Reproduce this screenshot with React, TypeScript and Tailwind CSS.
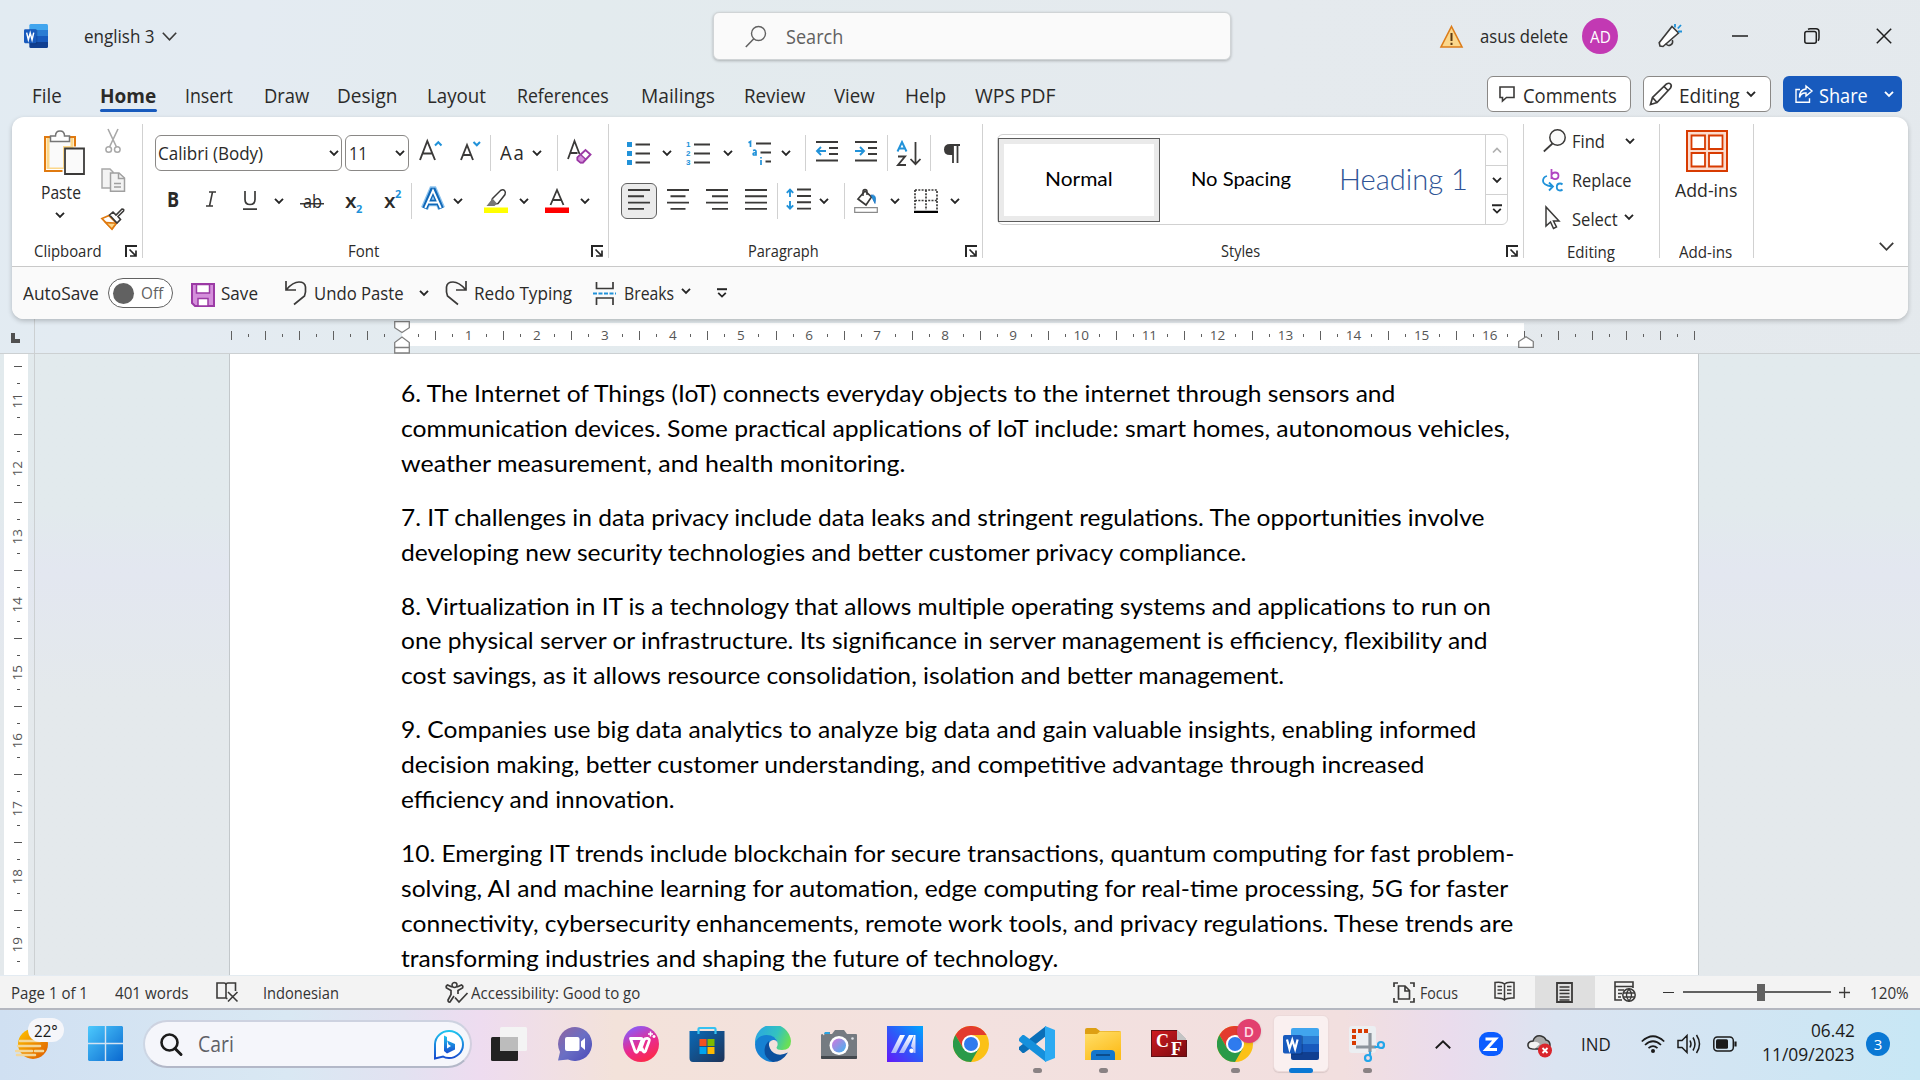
import { useLayoutEffect, useRef, useState, type ReactNode } from "react";

/** Single-line text drawn at a given width. */
function Fit({ w, className = "", children }: { w: number; className?: string; children: ReactNode }) {
  const ref = useRef<HTMLSpanElement>(null);
  const [scale, setScale] = useState(1);
  useLayoutEffect(() => {
    if (ref.current) setScale(w / ref.current.offsetWidth);
  }, [w]);
  return (
    <span className={"block shrink-0 whitespace-nowrap " + className} style={{ width: w }}>
      <span ref={ref} className="inline-block origin-left" style={{ transform: `scaleX(${scale})` }}>
        {children}
      </span>
    </span>
  );
}

function Svg({ w, h, vb, className = "", children }: { w: number; h: number; vb?: string; className?: string; children: ReactNode }) {
  return (
    <svg width={w} height={h} viewBox={vb ?? `0 0 ${w} ${h}`} fill="none" stroke="#3b3a39" strokeWidth={1.5} className={"shrink-0 overflow-visible " + className}>
      {children}
    </svg>
  );
}

const Chev = ({ className = "", color = "#262626" }: { className?: string; color?: string }) => (
  <Svg w={10} h={6} className={className}>
    <path d="M1 .8 5 4.8 9 .8" stroke={color} strokeWidth={1.9} />
  </Svg>
);

const Sep = ({ className = "" }: { className?: string }) => <div className={"h-9 w-px shrink-0 bg-[#d1d1d1] " + className} />;

const Launcher = ({ className = "" }: { className?: string }) => (
  <Svg w={12} h={12} className={className}>
    <path d="M1 12V1h11" strokeWidth={2} stroke="#262626" />
    <path d="m4.500 4.500 6 6M11 5.500V11H5" stroke="#262626" strokeWidth={1.7} />
  </Svg>
);

const Overflow = ({ className = "" }: { className?: string }) => (
  <Svg w={10} h={10} className={className}>
    <path d="M0 1.200h10" stroke="#262626" strokeWidth={2} />
    <path d="m1.200 4.800 3.800 3.800 3.800-3.800" stroke="#262626" strokeWidth={1.8} />
  </Svg>
);

function WordIcon({ w, h }: { w: number; h: number }) {
  return (
    <svg width={w} height={h} viewBox="0 0 36 32" preserveAspectRatio="none" className="shrink-0">
      <path d="M10 0h24q2 0 2 2v6H8V2q0-2 2-2z" fill="#41a5ee" />
      <path d="M8 8h28v8H8z" fill="#2b7cd3" />
      <path d="M8 16h28v8H8z" fill="#185abd" />
      <path d="M8 24h28v6q0 2-2 2H10q-2 0-2-2z" fill="#103f91" />
      <path d="M8 7h10q2 0 2 2v16q0 2-2 2H8z" fill="#0b2d66" opacity=".35" />
      <rect y="7" width="18.500" height="18.500" rx="1.800" fill="#185abd" />
      <path d="M4 11.500 6.500 21 9.300 12l2.800 9 2.500-9.500" fill="none" stroke="#fff" strokeWidth="2.200" />
    </svg>
  );
}

function TitleBar() {
  return (
    <header className="flex h-[72px] items-center">
      <div className="ml-6 flex"><WordIcon w={24} h={24} /></div>
      <Fit w={71} className="ml-9 text-[18px]">english 3</Fit>
      <Svg w={15} h={9} className="ml-[7px]"><path d="m.8.800 6.700 7 6.700-7" strokeWidth={1.600} /></Svg>
      <div className="ml-[536px] flex h-12 w-[518px] shrink-0 items-center rounded-md border border-[#d0d4d6] bg-[#fafafa] shadow-[0_1px_3px_rgba(0,0,0,0.25)]">
        <Svg w={22} h={23} className="ml-[31px]">
          <circle cx="13.500" cy="8.500" r="7" stroke="#616161" strokeWidth={1.400} />
          <path d="M8.800 13.800.8 22" stroke="#616161" strokeWidth={1.500} />
        </Svg>
        <Fit w={57} className="mt-0.5 ml-[19px] text-[20px] text-[#616161]">Search</Fit>
      </div>
      <Svg w={23} h={23} className="ml-[209px]">
        <path d="M11.500 1.500 22 22H1z" fill="#fbd78b" stroke="#dc7d1b" strokeWidth={1.600} />
        <path d="M11.500 8v8m0 1.800v2.200" stroke="#5c3a12" strokeWidth={2} />
      </Svg>
      <Fit w={88} className="ml-[17px] text-[18px]">asus delete</Fit>
      <div className="ml-3.5 flex size-9 shrink-0 items-center justify-center rounded-full bg-[#c239b3] text-[16px] text-white">
        <Fit w={21} className="mt-0.5">AD</Fit>
      </div>
      <Svg w={24} h={24} className="ml-10">
        <path d="M14 2.500 20.500 9 5 22.500l-3-.5-.8-3.200z" fill="#fff" strokeWidth={1.600} />
        <path d="M8 19.500q1.500 3 4.500 1.500t1.800-5" strokeWidth={1.600} />
        <path d="M17 0v3.500m2.800 1L23 1m-3 6.500h4" stroke="#2192d9" strokeWidth={1.800} />
      </Svg>
      <Svg w={16} h={2} className="ml-[50px]"><path d="M0 1h16" stroke="#1f1f1f" strokeWidth={1.500} /></Svg>
      <Svg w={16} h={16} className="ml-[56px]">
        <rect x=".8" y="3.500" width="11.500" height="11.700" rx="2" stroke="#1f1f1f" />
        <path d="M4 1.200Q5 .8 6 .8h6q3 0 3 3v6q0 2-1 3" stroke="#1f1f1f" />
      </Svg>
      <Svg w={16} h={16} className="ml-[56px]"><path d="m.8.800 14.400 14.400m0-14.400L.8 15.200" stroke="#1f1f1f" /></Svg>
    </header>
  );
}

function Tabs() {
  return (
    <nav className="flex h-[45px] items-start text-[20px] leading-[48px]">
      <Fit w={30} className="ml-8">File</Fit>
      <div className="ml-[38px] flex w-[57px] shrink-0 flex-col">
        <Fit w={56} className="h-[37px] font-bold">Home</Fit>
        <div className="h-[3px] rounded-full bg-[#185abd]" />
      </div>
      <Fit w={48} className="ml-7">Insert</Fit>
      <Fit w={45} className="ml-[31px]">Draw</Fit>
      <Fit w={60} className="ml-7">Design</Fit>
      <Fit w={59} className="ml-[30px]">Layout</Fit>
      <Fit w={92} className="ml-[31px]">References</Fit>
      <Fit w={74} className="ml-8">Mailings</Fit>
      <Fit w={61} className="ml-[29px]">Review</Fit>
      <Fit w={41} className="ml-[29px]">View</Fit>
      <Fit w={41} className="ml-[30px]">Help</Fit>
      <Fit w={81} className="ml-[29px]">WPS PDF</Fit>
      <div className="mt-1 ml-[431px] flex h-9 w-[144px] shrink-0 items-center rounded-md border border-[#8a8886] bg-white leading-none">
        <Svg w={16} h={16} className="ml-[11px]"><path d="M1 1h14v10.500H7.500L3.500 15v-3.500H1z" strokeWidth={1.600} /></Svg>
        <Fit w={94} className="mt-[3px] ml-[8px]">Comments</Fit>
      </div>
      <div className="mt-1 ml-3 flex h-9 w-[128px] shrink-0 items-center rounded-md border border-[#8a8886] bg-white leading-none">
        <Svg w={24} h={24} className="ml-[5px]">
          <path d="m1.500 22.500 2-7L17.500 2q2.500-1.500 4 0t0 4L8 20.500zM15 4.500 19.500 9M3.500 15.500 8 20.500" strokeWidth={1.700} />
        </Svg>
        <Fit w={61} className="mt-[3px] ml-[6px]">Editing</Fit>
        <Chev className="ml-[6px]" />
      </div>
      <div className="mt-1 ml-3 flex h-9 w-[119px] shrink-0 items-center rounded-md bg-[#185abd] leading-none text-white">
        <Svg w={18} h={18} className="ml-[12px]">
          <path d="M5 4.500H1v12.700h13.500v-4M11 1l6 5-6 5V8q-5-.5-6.500 4.500Q4.500 4.500 11 4z" stroke="#fff" strokeWidth={1.400} />
        </Svg>
        <Fit w={49} className="mt-[3px] ml-[6px]">Share</Fit>
        <Chev className="ml-[16px]" color="#fff" />
      </div>
    </nav>
  );
}

const Label = ({ children }: { children: ReactNode }) => <div className="flex h-[15px] items-center pt-px text-[16px] leading-none">{children}</div>;

function Clipboard() {
  return (
    <section className="flex h-[134px] w-[131px] shrink-0 flex-col border-r border-[#d1d1d1]">
      <div className="flex h-[119px]">
        <div className="flex w-[77px] flex-col">
          <Svg w={41} h={45} className="mt-[6px] ml-8">
            <path d="M2.500 7.500h27V18H20v21H2.500z" fill="#fbd78b" stroke="none" />
            <path d="M7 7H1v34h17.500" stroke="#e07a10" strokeWidth={2} />
            <path d="M25 7h6v9.500" stroke="#e07a10" strokeWidth={2} />
            <path d="M5.500 9h21v7H19v21.500H5.500z" fill="#fafafa" stroke="none" />
            <path d="M6.500 11.500V6h5q0-5 4.500-5t4.500 5h5v5.500z" fill="#fff" stroke="#757575" strokeWidth={1.500} />
            <path d="M21 18.500h19V44H21z" fill="#fafafa" strokeWidth={1.800} />
          </Svg>
          <Fit w={40} className="mt-[7px] ml-[29px] text-[18px] leading-[20px]">Paste</Fit>
          <Chev className="mt-[10px] ml-[43px]" />
        </div>
        <div className="ml-3 flex w-6 flex-col items-center">
          <Svg w={16} h={24} className="mt-[5px]">
            <path d="M3 0 11.500 18M13 0 4.500 18" stroke="#a8a8a8" strokeWidth={1.600} />
            <circle cx="3.700" cy="20.500" r="2.800" stroke="#a8a8a8" /><circle cx="12.300" cy="20.500" r="2.800" stroke="#a8a8a8" />
          </Svg>
          <Svg w={24} h={24} className="mt-[15px]">
            <path d="M1 1h8l3 3v16H1z" stroke="#a8a8a8" fill="#f3f3f3" />
            <path d="M9.500 5H18l5.500 5v13.300h-14z" stroke="#a0a0a0" fill="#f3f3f3" />
            <path d="M17.500 5v5.500h6M13 15.500h7M13 19h7" stroke="#a0a0a0" />
          </Svg>
          <Svg w={24} h={23} className="mt-[15px]">
            <path d="M1 11.500 8 8.500l7.500 7.500-4.500 6z" fill="#fff" stroke="#e07a10" strokeWidth={1.800} />
            <path d="M4.500 15.500q5 .5 9 .5l1 1-3.500 5z" fill="#fbd78b" stroke="#e07a10" strokeWidth={1.400} />
            <path d="m8.500 8 3.500-3 3 3 6-6q2.500 0 1.500 2L17 9.500l2.500 3-3.500 3.500z" fill="#fff" strokeWidth={1.600} />
          </Svg>
        </div>
      </div>
      <Label><Fit w={68} className="ml-[22px]">Clipboard</Fit><Launcher className="ml-[23px]" /></Label>
    </section>
  );
}

function FontGroup() {
  return (
    <section className="flex h-[134px] w-[466px] shrink-0 flex-col border-r border-[#d1d1d1]">
      <div className="mt-[11px] flex h-9 items-center">
        <div className="ml-3 flex h-9 w-[187px] shrink-0 items-center rounded-md border border-[#8a8886] bg-white text-[18px] leading-none">
          <Fit w={105} className="ml-[2px]">Calibri (Body)</Fit><Chev className="ml-[66px]" />
        </div>
        <div className="ml-[3px] flex h-9 w-[64px] shrink-0 items-center rounded-md border border-[#8a8886] bg-white text-[18px] leading-none">
          <Fit w={19} className="ml-[3px]">11</Fit><Chev className="ml-[27px]" />
        </div>
        <Svg w={23} h={22} className="-mt-1.5 ml-2.5">
          <path d="M1 21 8.300 2 16 21M3.500 14.500h10" strokeWidth={1.900} /><path d="m16 6.500 3.300-3.300L22.500 6.500" stroke="#2192d9" strokeWidth={2} />
        </Svg>
        <Svg w={21} h={22} className="-mt-1.5 ml-[18px]">
          <path d="M1 21 7 6l6 15M3 16h8" strokeWidth={1.900} /><path d="m13.500 3 3.300 3.300L20 3" stroke="#2192d9" strokeWidth={2} />
        </Svg>
        <Sep className="ml-[9px]" />
        <Fit w={26} className="ml-[9px] text-[20px] leading-none tracking-[2px]">Aa</Fit>
        <Chev className="ml-[6px]" />
        <Sep className="ml-[15px]" />
        <Svg w={24} h={24} className="-mt-1 ml-[9px]">
          <path d="M1 20 7.500 2 12.500 15M3.500 14h7" strokeWidth={1.800} />
          <path d="m10.500 18.500 8-7.500 5 4.500-7.500 8h-2.500L10.500 21z" fill="#fff" stroke="#9b3aa5" strokeWidth={1.900} />
          <path d="m10.500 18.500 3-3 5 4.500-2.500 3.500h-2.500L10.500 21z" fill="#d48fdb" stroke="#9b3aa5" strokeWidth={1.500} />
        </Svg>
      </div>
      <div className="mt-3 flex h-9 items-center leading-none">
        <Fit w={12} className="-mt-1 ml-6 text-[21px] font-bold">B</Fit>
        <Svg w={10} h={16} className="-mt-1 ml-[27px]"><path d="M3 1h7M0 15h7M6.500 1l-3 14" strokeWidth={1.600} /></Svg>
        <Svg w={14} h={19} className="-mt-0.5 ml-[27px]"><path d="M2 0v8.500q0 5 5 5t5-5V0M0 18.200h14" strokeWidth={1.700} /></Svg>
        <Chev className="ml-[17px]" />
        <div className="ml-4 flex h-6 w-6 shrink-0 items-center justify-center bg-[linear-gradient(#3b3a39,#3b3a39)] bg-[length:24px_1.500px] bg-[position:0_14px] bg-no-repeat text-[18px]"><Fit w={19}>ab</Fit></div>
        <div className="ml-[21px] flex w-[17px] shrink-0 items-end"><Fit w={11} className="text-[19px] font-semibold">x</Fit><Fit w={6} className="-mb-[3px] text-[11px] font-bold text-[#2192d9]">2</Fit></div>
        <div className="ml-[22px] flex w-[17px] shrink-0 items-start"><Fit w={11} className="text-[19px] font-semibold">x</Fit><Fit w={6} className="-mt-[4px] text-[11px] font-bold text-[#2192d9]">2</Fit></div>
        <Sep className="ml-[10px]" />
        <Svg w={24} h={24} className="-mt-1 ml-[9px]">
          <path d="M3.500 21.500 11.500 3h1l8 18.500M7 15.500h10" stroke="#8ec3ee" strokeWidth={7.500} />
          <path d="M3.800 21.500 11.500 3.500h1l7.700 18M7 15.500h10" stroke="#1068b8" strokeWidth={5.400} />
          <path d="M4.200 21 12 3.500 19.800 21M7.500 15.500h9" stroke="#fff" strokeWidth={1.900} />
        </Svg>
        <Chev className="ml-2" />
        <Svg w={24} h={24} className="ml-[21px]">
          <path d="M0 18.500h24V24H0z" fill="#ff0" stroke="none" />
          <path d="m8.500 9.500 8-8q2.500-1.500 4 0t.5 4l-7 9-3.500.5-3-2.500z" fill="#fff" /><path d="m8.500 9.500 4.500 5-2.500 2.500H2.500z" fill="#767676" stroke="none" />
        </Svg>
        <Chev className="ml-[11px]" />
        <Svg w={24} h={24} className="ml-4">
          <path d="M0 18.500h24V24H0z" fill="red" stroke="none" /><path d="M5.500 16 12 1l6.500 15M8 11h8" strokeWidth={1.800} />
        </Svg>
        <Chev className="ml-[11px]" />
      </div>
      <div className="h-6" />
      <Label><Fit w={31} className="ml-[205px]">Font</Fit><Launcher className="ml-[212px]" /></Label>
    </section>
  );
}

const lines = ["M0 1h22M0 7.300h16M0 13.600h22M0 19.900h16", "M0 1h22M3.500 7.300h15M0 13.600h22M3.500 19.900h15", "M0 1h22M6 7.300h16M0 13.600h22M6 19.900h16", "M0 1h22M0 7.300h22M0 13.600h22M0 19.900h22"];
const Align = ({ n, className = "" }: { n: number; className?: string }) => <Svg w={22} h={21} className={"-mt-1 " + className}><path d={lines[n]} strokeWidth={1.900} /></Svg>;

function Paragraph() {
  return (
    <section className="flex h-[134px] w-[374px] shrink-0 flex-col border-r border-[#d1d1d1]">
      <div className="mt-[11px] flex h-9 items-center">
        <Svg w={23} h={23} className="ml-[18px]">
          <path d="M0 0h5v5H0zm0 9h5v5H0zm0 9h5v5H0z" fill="#2192d9" stroke="none" /><path d="M8.500 2.500H23M8.500 11.500H23M8.500 20.500H23" strokeWidth={1.900} />
        </Svg>
        <Chev className="ml-[12px]" />
        <div className="ml-3.5 flex w-6 shrink-0 items-center font-['Liberation_Sans',sans-serif] text-[8px] leading-[9px] font-bold text-[#2192d9]">
          <div className="flex w-[7px] flex-col"><span>1</span><span>2</span><span>3</span></div>
          <Svg w={16} h={23} className="ml-[1px]"><path d="M0 2.500h16M0 11.500h16M0 20.500h16" strokeWidth={1.900} /></Svg>
        </div>
        <Chev className="ml-[13px]" />
        <Svg w={23} h={24} className="ml-[15px]">
          <path d="M8 2.500h15M12.500 11.500H23M17.500 20.500H23" strokeWidth={1.900} />
          <path d="M.5 1.800 2.500.5V6M5 9.500q3-1 3 1V14H5.500Q4 12 8 11.500M13 16v1.500M13 19v5" stroke="#2192d9" strokeWidth={1.700} />
        </Svg>
        <Chev className="ml-2.5" />
        <Sep className="ml-3.5" />
        <Svg w={22} h={22} className="-mt-1 ml-2.5">
          <path d="M0 2h22M13 8h9M13 14h9M0 20.500h22" strokeWidth={1.900} /><path d="M10 11H1.500M5 7l-4 4 4 4" stroke="#2192d9" strokeWidth={1.900} />
        </Svg>
        <Svg w={22} h={22} className="-mt-1 ml-[17px]">
          <path d="M0 2h22M13 8h9M13 14h9M0 20.500h22" strokeWidth={1.900} /><path d="M0 11h8.500M5 7l4 4-4 4" stroke="#2192d9" strokeWidth={1.900} />
        </Svg>
        <Sep className="ml-2.5" />
        <Svg w={24} h={25} className="ml-[9px]">
          <path d="M.5 10.500 5 1l4.500 9.500M2 7.500h6" stroke="#2192d9" strokeWidth={2} /><path d="M1 15.500h7L1 24h8" strokeWidth={1.900} />
          <path d="M18.500 1v22m-5-5 5 5.200 5-5.200" strokeWidth={1.800} />
        </Svg>
        <Sep className="ml-[9px]" />
        <Svg w={16} h={19} className="ml-[13px]"><path d="M16 1H6.500M9 1v18M13.500 1v18" strokeWidth={1.800} /><path d="M9 0H6Q0 0 0 5.500T6 11h3z" fill="#3b3a39" stroke="none" /></Svg>
      </div>
      <div className="mt-3 flex h-9 items-center">
        <div className="ml-3 flex size-9 shrink-0 items-center justify-center rounded-md border border-[#616161] bg-[#ebebeb]"><Align n={0} /></div>
        <Align n={1} className="ml-2.5" /><Align n={2} className="ml-[17px]" /><Align n={3} className="ml-[17px]" />
        <Sep className="ml-2.5" />
        <Svg w={25} h={22} className="-mt-1 ml-2">
          <path d="M11 1.500h14M11 8h14M11 14.300h14M11 20.600h14" strokeWidth={1.900} /><path d="M4 9V2M.8 4.800 4 1.500l3.200 3.300M4 13v7M.8 17.300 4 20.600l3.200-3.300" stroke="#2192d9" strokeWidth={1.900} />
        </Svg>
        <Chev className="ml-[8px]" />
        <Sep className="ml-[15px]" />
        <Svg w={24} h={24} className="ml-[9px]">
          <path d="M.7 18.700h22.600V23.300H.7z" stroke="#8a8a8a" strokeWidth={1.200} />
          <path d="m4 10 7-8 6.500 6-5.500 8z" strokeWidth={1.700} /><path d="M9 7V2.500q0-2 2-2t2 2V6" /><path d="M17 6q3-.5 4 1.500t0 7l-2.500-5z" fill="#2192d9" stroke="#2171c0" strokeWidth={.8} />
        </Svg>
        <Chev className="ml-3" />
        <Svg w={24} h={24} className="ml-3.5">
          <path d="M1 1h22v20M1 1v20M12 1v20M1 11.500h22" strokeDasharray="2 1.300" strokeWidth={1.700} /><path d="M0 22.800h24" stroke="#000" strokeWidth={2.200} />
        </Svg>
        <Chev className="ml-[12px]" />
      </div>
      <div className="h-6" />
      <Label><Fit w={71} className="ml-[139px]">Paragraph</Fit><Launcher className="ml-[146px]" /></Label>
    </section>
  );
}

function Styles() {
  return (
    <section className="flex h-[134px] w-[541px] shrink-0 flex-col border-r border-[#d1d1d1]">
      <div className="mt-2.5 ml-3.5 flex h-[91px] w-[511px] shrink-0 items-center rounded-md border border-[#d1d1d1] font-['Lato','Liberation_Sans',sans-serif] text-black">
        <div className="flex h-[84px] w-[162px] shrink-0 items-center justify-center border-[1.500px] border-[#5c5c5c] bg-[#eaeaea]">
          <div className="flex h-[72px] w-[150px] items-center justify-center bg-white pb-[3px] text-[20px]"><Fit w={68}>Normal</Fit></div>
        </div>
        <Fit w={100} className="-mt-[3px] ml-[31px] text-[20px]">No Spacing</Fit>
        <Fit w={129} className="-mt-[3px] ml-[48px] text-[30px] font-light text-[#2f5496]">Heading 1</Fit>
        <div className="ml-[17px] flex h-full w-[23px] shrink-0 flex-col border-l border-[#d1d1d1]">
          <div className="flex flex-1 items-center justify-center"><Svg w={10} h={6}><path d="m1 5.500 4-4 4 4" stroke="#b0b0b0" strokeWidth={1.700} /></Svg></div>
          <div className="flex h-[30px] items-center justify-center border-y border-[#d1d1d1]"><Chev /></div>
          <div className="flex flex-1 items-center justify-center"><Overflow /></div>
        </div>
      </div>
      <div className="h-[18px]" />
      <Label><Fit w={39} className="ml-[238px]">Styles</Fit><Launcher className="ml-[246px]" /></Label>
    </section>
  );
}

function EditingGroup() {
  return (
    <section className="flex h-[134px] w-[136px] shrink-0 flex-col border-r border-[#d1d1d1] text-[18px] leading-none">
      <div className="-mt-px flex h-[38px] items-center">
        <Svg w={23} h={23} className="-mt-0.5 ml-[19px]"><circle cx="14.500" cy="8.500" r="7.700" fill="#fafafa" /><path d="M9.500 14.500.8 22.500" strokeWidth={1.700} /></Svg>
        <Fit w={33} className="-mt-0.5 ml-1.5">Find</Fit><Chev className="-mt-0.5 ml-5" />
      </div>
      <div className="flex h-[39px] items-center">
        <Svg w={21} h={24} className="ml-[18px]">
          <path d="M9.500 1v10M9.500 7q1-2.500 3.500-2.500 3.500 0 3.500 3.300T13 11.200q-2.500 0-3.500-2.500" stroke="#b146c2" strokeWidth={1.800} />
          <path d="M20.500 16.500q-1-1-2.500-1-3.200 0-3.200 3.500T18 22.500q1.500 0 2.500-1M5 8Q1 9 1 13t9 5.500M7 14.500l4 4-4 4" stroke="#2192d9" strokeWidth={1.800} />
        </Svg>
        <Fit w={60} className="ml-[9px]">Replace</Fit>
      </div>
      <div className="flex h-[39px] items-center">
        <Svg w={15} h={23} className="ml-[21px]"><path d="M1 1v19l4.500-4 3 6.500 3-1.500-3-6h5.500z" fill="#fafafa" /></Svg>
        <Fit w={46} className="mt-0.5 ml-3">Select</Fit><Chev className="-mt-0.5 ml-1.5" />
      </div>
      <div className="h-[6px]" />
      <Label><Fit w={48} className="mt-px ml-[43px]">Editing</Fit></Label>
    </section>
  );
}

function Ribbon() {
  return (
    <div className="relative z-10 mx-3 flex h-[202px] flex-col overflow-hidden rounded-xl bg-white shadow-[0_2px_5px_rgba(0,0,0,0.22)]">
      <div className="flex h-[150px] shrink-0 border-b border-[#c9c9c9] pt-[7px]">
        <Clipboard /><FontGroup /><Paragraph /><Styles /><EditingGroup />
        <section className="flex h-[134px] w-[94px] shrink-0 flex-col border-r border-[#d1d1d1]">
          <Svg w={42} h={42} className="mt-1.5 ml-[26px]">
            <path d="M1 1h40v40H1z" stroke="#d83b01" strokeWidth={2} fill="#fbdccf" />
            <path d="M5.500 5.500h13.500V19H5.500zM23 5.500h13.500V19H23zM5.500 23h13.500v13.500H5.500zM23 23h13.500v13.500H23z" fill="#fff" stroke="#d83b01" strokeWidth={1.800} />
          </Svg>
          <Fit w={62} className="mt-[8px] ml-[15px] text-[18px] leading-5">Add-ins</Fit>
          <div className="h-[44px]" />
          <Label><Fit w={53} className="mt-px ml-[19px]">Add-ins</Fit></Label>
        </section>
        <Svg w={15} h={9} className="mt-[118px] ml-[125px]"><path d="m.8.800 6.700 7 6.700-7" strokeWidth={1.800} /></Svg>
      </div>
      <div className="flex flex-1 items-center bg-[#fafafa] text-[18px] leading-none">
        <Fit w={76} className="ml-[11px]">AutoSave</Fit>
        <div className="ml-[9px] flex h-[30px] w-[65px] shrink-0 items-center rounded-full border border-[#616161] bg-white text-[16px] text-[#616161]">
          <div className="ml-1 size-[21px] rounded-full bg-[#616161]" /><Fit w={22} className="ml-[7px]">Off</Fit>
        </div>
        <Svg w={24} h={24} className="mt-1 ml-[18px]">
          <path d="M1 1h22v22H4l-3-3z" fill="#d48fdb" stroke="#9b3aa5" strokeWidth={2} />
          <path d="M5.500 1.500h13V10h-13z" fill="#fff" stroke="#9b3aa5" /><path d="M7 15.500h10V23H7z" fill="#fff" stroke="#9b3aa5" />
        </Svg>
        <Fit w={37} className="ml-1.5">Save</Fit>
        <Svg w={22} h={24} className="ml-[27px]"><path d="M1 0v9h10M1.500 8.500Q8 1 14 1t6.500 5-1 9L9 23.500" strokeWidth={1.700} /></Svg>
        <Fit w={90} className="ml-[7px]">Undo Paste</Fit><Chev className="ml-[15px]" />
        <Svg w={22} h={24} className="ml-4"><path d="M21 0v9H11M20.500 8.500Q14 1 8 1T1.500 6t1 9L13 23.500" strokeWidth={1.700} /></Svg>
        <Fit w={98} className="ml-[7px]">Redo Typing</Fit>
        <Svg w={23} h={23} className="ml-[21px]">
          <path d="M3.500 0v6.500H20V0M3.500 23v-7H20v7" strokeWidth={1.700} /><path d="M0 11.500h23" stroke="#2192d9" strokeWidth={1.900} strokeDasharray="4 1.500" />
        </Svg>
        <Fit w={50} className="ml-2">Breaks</Fit><Chev className="-mt-1 ml-[7px]" /><Overflow className="ml-[26px]" />
      </div>
    </div>
  );
}

const hTicks = Array.from({ length: 87 }, (_, i) => i - 10);

function HRuler() {
  return (
    <div className="flex h-[35px] shrink-0 border-b border-[#ccd0d2]">
      <div className="flex w-[35px] shrink-0 border-r border-[#ccd0d2]"><Svg w={9} h={10} className="mt-3.5 ml-[11px]"><path d="M2 0v8h7" stroke="#505050" strokeWidth={4} /></Svg></div>
      <div className="relative flex-1">
        <div className="absolute top-[4px] left-[367px] h-[23px] w-[1122px] bg-white" />
        <div className="relative ml-[188px] flex h-[33px] items-center font-['Open_Sans',sans-serif] text-[13.500px] leading-none text-[#555]">
          {hTicks.map((k) => (
            <div key={k} className="flex w-[17.020px] shrink-0 items-center justify-center">
              {k > 0 && k < 66 && k % 4 === 0 ? <span className="relative right-px whitespace-nowrap">{k / 4}</span> : k === 0 ? null : <div className={k % 2 === 0 ? "h-[9px] w-px bg-[#606060]" : "h-[3px] w-px bg-[#606060]"} />}
            </div>
          ))}
        </div>
        <Svg w={16} h={33} className="absolute top-[2px] left-[359px]">
          <path d="M.7.700h14.600v6L8 11.500.7 6.700zM.7 32V21.500L8 16l7.300 5.500V32zM.7 26.500h14.600" fill="#fff" stroke="#808080" strokeWidth={1.300} />
        </Svg>
        <Svg w={16} h={12} className="absolute top-[17px] left-[1483px]"><path d="M.7 11.300V5.500L8 .7l7.300 4.800v5.800z" fill="#fff" stroke="#808080" strokeWidth={1.300} /></Svg>
      </div>
    </div>
  );
}

const vTicks = Array.from({ length: 36 }, (_, i) => i - 2);

const paragraphs: [string, number][][] = [
  [
    ["6. The Internet of Things (IoT) connects everyday objects to the internet through sensors and", 994],
    ["communication devices. Some practical applications of IoT include: smart homes, autonomous vehicles,", 1109],
    ["weather measurement, and health monitoring.", 504],
  ],
  [
    ["7. IT challenges in data privacy include data leaks and stringent regulations. The opportunities involve", 1083],
    ["developing new security technologies and better customer privacy compliance.", 845],
  ],
  [
    ["8. Virtualization in IT is a technology that allows multiple operating systems and applications to run on", 1090],
    ["one physical server or infrastructure. Its significance in server management is efficiency, flexibility and", 1087],
    ["cost savings, as it allows resource consolidation, isolation and better management.", 883],
  ],
  [
    ["9. Companies use big data analytics to analyze big data and gain valuable insights, enabling informed", 1075],
    ["decision making, better customer understanding, and competitive advantage through increased", 1023],
    ["efficiency and innovation.", 274],
  ],
  [
    ["10. Emerging IT trends include blockchain for secure transactions, quantum computing for fast problem-", 1113],
    ["solving, AI and machine learning for automation, edge computing for real-time processing, 5G for faster", 1107],
    ["connectivity, cybersecurity enhancements, remote work tools, and privacy regulations. These trends are", 1112],
    ["transforming industries and shaping the future of technology.", 657],
  ],
];

function Canvas() {
  return (
    <div className="flex h-[621px] shrink-0 overflow-hidden bg-linear-to-b from-[#e2eaed] from-25% via-[#e3e7f0] via-35% to-[#e4e9ec] to-55%">
      <div className="flex w-[35px] shrink-0 border-r border-[#ccd0d2]">
        <div className="ml-1 flex w-6 flex-col items-center bg-white font-['Open_Sans',sans-serif] text-[13.500px] leading-none text-[#555]">
          <div className="h-[4px] shrink-0" />
          {vTicks.map((k) => (
            <div key={k} className="flex h-[17.010px] shrink-0 items-center justify-center pl-1">
              {k % 4 === 0 ? <span className="-rotate-90">{11 + k / 4}</span> : <div className={k % 2 === 0 ? "h-px w-2 bg-[#555]" : "h-px w-[3px] bg-[#555]"} />}
            </div>
          ))}
        </div>
      </div>
      <article className="ml-[194px] w-[1470px] shrink-0 border-x border-[#c3c8cb] bg-white pl-[171px] font-['Lato','Liberation_Sans',sans-serif] text-[24px] leading-[34.850px] text-black">
        <div className="h-[22px]" />
        {paragraphs.map((p, i) => (
          <div key={i} className="mb-[19.200px]">
            {p.map(([t, w]) => <Fit key={t} w={w} className="h-[34.850px]">{t}</Fit>)}
          </div>
        ))}
      </article>
    </div>
  );
}

function StatusBar() {
  return (
    <footer className="mt-px flex h-8 shrink-0 items-center bg-[#f3f3f3] text-[16px] leading-none text-[#333]">
      <Fit w={77} className="mt-px ml-[11px]">Page 1 of 1</Fit>
      <Fit w={74} className="mt-px ml-[27px]">401 words</Fit>
      <Svg w={22} h={20} className="ml-[27px]"><path d="M10 2v14H1V1h7q2 0 2 2 0-2 2-2h7.500v8M10 16.500h1.500M12 10l9.500 9.500m0-9.500L12 19.500" strokeWidth={1.600} /></Svg>
      <Fit w={76} className="mt-px ml-[25px]">Indonesian</Fit>
      <Svg w={23} h={21} className="ml-[106px]">
        <circle cx="9.500" cy="3" r="2.500" /><path d="M7 5 2.500 3Q.5 4 1.500 6L6 8.500v4L3 18q0 2.500 2 2l4-6M12 5l4.500-2q2 1 1 3L13 8.500V12M10 15.500l4 4.500 8.500-9" strokeWidth={1.700} />
      </Svg>
      <Fit w={169} className="mt-px ml-[3px]">Accessibility: Good to go</Fit>
      <Svg w={22} h={21} className="ml-[753px]"><path d="M5 1H1v4M17 1h4v4M5 20H1v-4M17 20h4v-4M5.500 4H12l4.500 4.500V17h-11zM12 4v5h4.500" strokeWidth={1.700} /></Svg>
      <Fit w={38} className="mt-px ml-[5px]">Focus</Fit>
      <Svg w={21} h={20} className="-mt-0.5 ml-[36px]">
        <path d="M10.500 3v15.500M10.500 3Q8 .5 1 1.500V17q7-.5 9.500 2 2.500-2.500 9.500-2V1.500Q13 .5 10.500 3z" strokeWidth={1.500} /><path d="M3.500 5.500H8M3.500 9H8M3.500 12.500H8M13 5.500h4.500M13 9h4.500M13 12.500h4.500" />
      </Svg>
      <div className="ml-5 flex h-8 w-[60px] shrink-0 items-center justify-center bg-[#dfdfdf] pr-0.5">
        <Svg w={17} h={21}><path d="M1 1h15v19H1z" strokeWidth={1.800} /><path d="M3.500 5h10M3.500 8.300h10M3.500 11.600h10M3.500 14.900h10M3.500 18h10" strokeWidth={1.500} /></Svg>
      </div>
      <Svg w={22} h={21} className="-mt-0.5 ml-[19px]">
        <path d="M8 19H1V1h18v6M1 5.500h18M4 9h6M4 12.500h4M4 16h3" strokeWidth={1.600} />
        <circle cx="15" cy="14" r="6.200" fill="#f3f3f3" /><path d="M9 12h12M9 16h12M15 8q-5 6 0 12 5-6 0-12" strokeWidth={1.300} />
      </Svg>
      <div className="ml-[27px] h-px w-[11px] shrink-0 bg-[#333]" />
      <div className="ml-[9px] flex h-4 w-[148px] shrink-0 items-center">
        <div className="h-[2px] w-[74px] bg-[#616161]" /><div className="h-[17px] w-2 bg-[#616161]" /><div className="h-[2px] w-[66px] bg-[#616161]" />
      </div>
      <Svg w={11} h={11} className="ml-2"><path d="M5.500 0v11M0 5.500h11" strokeWidth={1.300} /></Svg>
      <Fit w={39} className="mt-px ml-[20px]">120%</Fit>
    </footer>
  );
}

const Chrome = () => (
  <svg width={36} height={36} viewBox="0 0 36 36">
    <circle cx="18" cy="18" r="18" fill="#fbc116" />
    <path d="M2.400 9A18 18 0 0 1 33.600 9H18L10.200 22.500z" fill="#e33b2e" />
    <path d="M2.400 9A18 18 0 0 0 18 36l7.800-13.500H10.200z" fill="#2a9a49" />
    <circle cx="18" cy="18" r="9" fill="#fff" /><circle cx="18" cy="18" r="7" fill="#2f7bee" />
  </svg>
);

function TaskIcon({ dot = false, children }: { dot?: boolean; children: ReactNode }) {
  return (
    <div className="flex h-[70px] w-[66px] shrink-0 flex-col items-center pt-4">
      <div className="flex h-9 items-center">{children}</div>
      {dot && <div className="mt-1.5 h-[5px] w-[9px] rounded-full bg-[#8a8284]" />}
    </div>
  );
}

function Taskbar() {
  return (
    <div className="flex h-[72px] shrink-0 items-start border-t-2 border-[#b4b7c0] bg-[linear-gradient(90deg,#d0e0f2_0%,#d9e8f3_15%,#e2e2f1_21%,#eedcf0_25%,#f3e2da_32%,#f3e1df_50%,#f2dfdf_70%,#eadced_75.500%,#dbe4f1_81%,#d2e5f3_90%,#c8e7f5_100%)] text-[#1b1b1b]">
      <div className="relative mt-[18px] ml-[15px] h-[36px] w-[34px] shrink-0">
        <svg width={34} height={36} viewBox="0 0 34 36">
          <defs><linearGradient id="sun" x1="0" y1="0" x2="1" y2="1"><stop offset="0" stopColor="#ffc400" /><stop offset="1" stopColor="#dd5a00" /></linearGradient></defs>
          <circle cx="18" cy="16" r="15" fill="url(#sun)" />
          <path d="M5 13h20M3 18h22M1 23h16m3 0h8M2 27h18" stroke="#f3d79a" strokeWidth="2.500" strokeLinecap="round" />
        </svg>
        <div className="absolute -top-[10px] left-[13px] flex h-6 w-9 items-center justify-center rounded-full bg-[#f5f6fa] text-[17px] leading-none"><Fit w={24}>22°</Fit></div>
      </div>
      <svg width={35} height={35} viewBox="0 0 35 35" className="mt-[16px] ml-[39px] shrink-0">
        <defs><linearGradient id="win" x1="0" y1="0" x2="1" y2="1"><stop offset="0" stopColor="#4cc9fd" /><stop offset="1" stopColor="#0a68cf" /></linearGradient></defs>
        <path d="M1 0h15.800v16.800H0V1zM18.200 0H34l1 1v15.800H18.200zM0 18.200h16.800V35H1l-1-1zM18.200 18.200H35V34l-1 1H18.200z" fill="url(#win)" />
      </svg>
      <div className="mt-[10px] ml-[20px] flex h-[48px] w-[329px] shrink-0 items-center rounded-full border-2 border-t-[#cdd2e0] border-r-[#d3cfdf] border-b-[#b3b8c8] border-l-[#cdd6e4] bg-[#f5f6fb]">
        <Svg w={22} h={23} className="ml-[15px]"><circle cx="9.500" cy="9.500" r="8" stroke="#1b1b1b" strokeWidth={2.600} /><path d="m15 15.500 6 6" stroke="#1b1b1b" strokeWidth={3} strokeLinecap="round" /></Svg>
        <Fit w={36} className="ml-4 text-[21px] leading-none text-[#5f6066]">Cari</Fit>
        <svg width={31} height={31} viewBox="0 0 31 31" fill="none" className="ml-[199px] shrink-0">
          <defs><linearGradient id="bing" x1="0" y1="0" x2="0" y2="1"><stop offset="0" stopColor="#1fc4ee" /><stop offset="1" stopColor="#174ccf" /></linearGradient></defs>
          <path d="M2 29.500V15A14 13.500 0 1 1 16 29q-4 0-6-1.500z" fill="#fff" stroke="url(#bing)" strokeWidth="2" />
          <path d="M11 6.500 14 8v11.500l4-2.500-2.500-1.500-1.500-4 8 3.500v5.500L14 24.500l-3-2.500z" fill="url(#bing)" />
        </svg>
      </div>
      <div className="ml-[4px] flex">
        <TaskIcon>
          <svg width={36} height={34} viewBox="0 0 36 34" className="mb-px"><rect y="10" width="27" height="24" rx="1.500" fill="#222" /><rect x="9" y="0" width="27" height="24" rx="1.500" fill="#f4f4f4" /><path d="M9 10h18v14H9z" fill="#bcbcbc" /></svg>
        </TaskIcon>
        <TaskIcon>
          <svg width={34} height={34} viewBox="0 0 34 34" className="mb-px"><defs><linearGradient id="chat" x1="0" y1="0" x2="1" y2="1"><stop offset="0" stopColor="#9264a0" /><stop offset=".5" stopColor="#6a6fc4" /><stop offset="1" stopColor="#4b49b8" /></linearGradient></defs>
            <path d="M0 33.500 2 25A17 17 0 1 1 10 32.500z" fill="url(#chat)" /><rect x="7" y="10" width="14.500" height="14" rx="2" fill="#fff" /><path d="M23 14.500 27 11v12l-4-3.500z" fill="#fff" /></svg>
        </TaskIcon>
        <TaskIcon>
          <svg width={36} height={36} viewBox="0 0 36 36"><defs><linearGradient id="wps" x1=".3" y1="0" x2=".8" y2="1"><stop offset="0" stopColor="#8a5cf8" /><stop offset=".5" stopColor="#e82a90" /><stop offset="1" stopColor="#ff2a3e" /></linearGradient></defs>
            <circle cx="18" cy="18" r="18" fill="url(#wps)" />
            <path d="M7.500 12.500 12 25q1.500 2.500 2.800 0L19 14q.5-1.500-1-1.500zM17 25l4-11q1-2 4-1.500 2 .5 1 3L22.500 25q-1.300 2-2.500 0l-1-3" fill="none" stroke="#fff" strokeWidth="2.800" strokeLinejoin="round" />
            <path d="M27.500 5.500v5M25 8h5M31 9v3M29.500 10.500h3" stroke="#fff" strokeWidth="1.500" /></svg>
        </TaskIcon>
        <TaskIcon>
          <svg width={36} height={36} viewBox="0 0 36 36"><defs><linearGradient id="store" x1="0" y1="0" x2="1" y2="1"><stop offset="0" stopColor="#0a6ab8" /><stop offset="1" stopColor="#1e3358" /></linearGradient></defs>
            <path d="M.500 5h35v27q0 4-3.500 4H4Q.5 36 .5 32z" fill="url(#store)" />
            <path d="M9.500 8V3q0-1 1-1h15q1 0 1 1v5" fill="none" stroke="#35c1f1" strokeWidth="2.200" />
            <path d="M10.500 13h7v7h-7z" fill="#f25022" /><path d="M18.500 13h7v7h-7z" fill="#7fba00" /><path d="M10.500 21h7v7h-7z" fill="#00a4ef" /><path d="M18.500 21h7v7h-7z" fill="#ffb900" /></svg>
        </TaskIcon>
        <TaskIcon>
          <svg width={36} height={36} viewBox="0 0 36 36"><defs><linearGradient id="edge" x1="0" y1=".2" x2="1" y2=".5"><stop offset="0" stopColor="#2aa5e4" /><stop offset=".6" stopColor="#33c2c0" /><stop offset="1" stopColor="#6adf55" /></linearGradient></defs>
            <path d="M0 18A18 18 0 0 1 36 15q0 9-9 9-5.500 0-5.500-2.500 2-2.500.5-6.500-3-5.500-10-5Q4 10.500 0 18z" fill="url(#edge)" />
            <path d="M0 18q2-9 11.500-9T22.500 17q-1-3.500-4.500-3-5 1-4 7 1.500 6 9 9l-4 6h-1A18 18 0 0 1 0 18z" fill="#1681d3" />
            <path d="M14 15q-1 8 5 12 6 3.500 14-.5Q27 36 18 36 9 32 9.500 24q.5-6 4.500-9z" fill="#0c4f9e" /></svg>
        </TaskIcon>
        <TaskIcon>
          <svg width={36} height={36} viewBox="0 0 36 36"><path d="M3 9.500 4 6h5v2h2l3-4h9l3 4h9q1 0 1 1v22q0 2-1.500 2h-33Q0 33 0 31V9q0-1 1.500-1z" fill="#757b81" /><path d="M0 30h36v2q0 1-1 1H1q-1 0-1-1z" fill="#43484d" /><path d="M4 6h4.500l.5 2H3z" fill="#2aa5e4" />
            <circle cx="18" cy="19.500" r="9.500" fill="#fff" /><defs><linearGradient id="lens" x1="0" y1="0" x2="1" y2="1"><stop offset=".2" stopColor="#b783e0" /><stop offset="1" stopColor="#3fb6f0" /></linearGradient></defs><circle cx="18" cy="19.500" r="7" fill="url(#lens)" /><circle cx="31.500" cy="12.500" r="1.300" fill="#dfe3e6" /></svg>
        </TaskIcon>
        <TaskIcon>
          <svg width={36} height={36} viewBox="0 0 36 36"><defs><linearGradient id="asus" x1="1" y1="0" x2="0" y2="1"><stop offset="0" stopColor="#00a6ff" /><stop offset=".5" stopColor="#2d5af8" /><stop offset="1" stopColor="#6418f8" /></linearGradient><linearGradient id="bar" x1="0" y1="0" x2="0" y2="1"><stop offset="0" stopColor="#fff" /><stop offset="1" stopColor="#a9b4fb" /></linearGradient></defs>
            <path d="M0 0h36v36H0z" fill="url(#asus)" /><path d="M13 9h5L9 27H4zM22 9h5L17 27h-5z" fill="url(#bar)" /><path d="M27 9h1.500v18h-2q1-3-1-5-1.500-1-1.500-2z" fill="url(#bar)" /><circle cx="24.500" cy="24.700" r="2.200" fill="#fff" /></svg>
        </TaskIcon>
        <TaskIcon><Chrome /></TaskIcon>
        <TaskIcon dot>
          <svg width={36} height={36} viewBox="0 0 36 36"><path d="M27 0v11L5 27H3.500L0 23.500V21z" fill="#0a6fb8" /><path d="M27 36V25L5 9H3.500L0 12.500V15z" fill="#1590dc" /><path d="M27 10v16l-10-8z" fill="#f3e1e0" /><path d="M26 0 36 4v28l-10 4z" fill="#2caaf2" /></svg>
        </TaskIcon>
        <TaskIcon dot>
          <svg width={36} height={34} viewBox="0 0 36 34"><defs><linearGradient id="dir" x1="0" y1="0" x2=".6" y2="1"><stop offset="0" stopColor="#ffdf6b" /><stop offset="1" stopColor="#fdbd1c" /></linearGradient></defs><path d="M0 3q0-2 2-2h9l4 3h19q2 0 2 2v6H0z" fill="#dd9f13" /><path d="M0 7h12l3-2.500h21V33H0z" fill="url(#dir)" /><path d="M6 33V27q0-4 4-4h16q4 0 4 4v6z" fill="#1476cc" /><path d="M11 28h14" stroke="#0b4c8c" strokeWidth="2" /></svg>
        </TaskIcon>
        <TaskIcon>
          <div className="relative mb-px flex h-[27px] w-9 items-center justify-center border border-[#5e1014] bg-linear-to-br from-[#cf1a20] to-[#7c0b10] font-['Liberation_Serif',serif] text-[18px] leading-none font-bold text-white">
            <span className="-mt-1.5">C</span><span className="mt-2.5 ml-[2px]">F</span>
            <div className="absolute -top-px -right-px size-[10px] bg-linear-to-tr from-[#c4c4c4] from-50% to-[#f3e1e1] to-50%" />
          </div>
        </TaskIcon>
        <TaskIcon dot>
          <div className="relative">
            <Chrome />
            <div className="absolute -top-[7px] left-5 flex size-6 items-center justify-center rounded-full bg-[#e2406f] text-[14px] font-semibold text-[#ffdbe5] shadow">D</div>
          </div>
        </TaskIcon>
        <div className="mx-[5px] mt-[5px] flex h-[57px] w-14 shrink-0 flex-col items-center rounded-md border border-[#ecdada] bg-[#faf0f0] pt-[12px] shadow-[0_1px_1px_rgba(0,0,0,0.1)]">
          <WordIcon w={36} h={32} /><div className="mt-2 h-[5px] w-6 shrink-0 rounded-full bg-[#0a78d4]" />
        </div>
        <TaskIcon dot>
          <svg width={36} height={36} viewBox="0 0 36 36" fill="none"><rect width="27" height="27" rx="3" fill="#eceff2" />
            <path d="M3 3h4v4H3zM9 3h4v4H9zM15 3h4v4h-4zM3 9h4v4H3zM3 15h4v4H3z" fill="#d83b01" />
            <path d="M21 7v19M7 21h20" stroke="#8c949c" strokeWidth="3.200" /><circle cx="19" cy="32" r="3" stroke="#23a6ea" strokeWidth="2.200" /><circle cx="32" cy="19" r="3" stroke="#23a6ea" strokeWidth="2.200" /><path d="M21 29v-3.500M29 21h-3.500" stroke="#23a6ea" strokeWidth="2.200" /></svg>
        </TaskIcon>
      </div>
      <div className="flex h-[68px] items-center">
        <Svg w={16} h={9} className="ml-[35px]"><path d="m.8 8.200 7.200-7 7.200 7" stroke="#1b1b1b" strokeWidth={1.900} /></Svg>
        <Svg w={24} h={24} className="ml-7"><rect width="24" height="24" rx="9" fill="#0b5cff" stroke="none" /><path d="M6.500 7h10L7 17.500h11" stroke="#fff" strokeWidth={3} /></Svg>
        <Svg w={25} h={24} className="mt-1 ml-6">
          <path d="M6 15Q0 15 1 10q1-3 5-3 2-6 8-5 4 1 5 4 4 1 4 5 0 4-4 4z" fill="#a9a9a9" stroke="#333" /><path d="M6 8q4-1 7 2l-5 4.500q-6 0-6-3 0-3.500 4-3.500z" fill="#f3f3f3" stroke="none" />
          <circle cx="18" cy="16.500" r="7" fill="#d9252c" stroke="none" /><path d="m15.500 14 5 5m0-5-5 5" stroke="#fff" strokeWidth={1.800} />
        </Svg>
        <Fit w={30} className="ml-[29px] text-[18px] leading-none">IND</Fit>
        <Svg w={24} h={18} className="ml-[30px]">
          <path d="M.8 6.500Q12-4 23.200 6.500M4 10q8-7.500 16 0M7.500 13.200q4.500-4 9 0" stroke="#1b1b1b" strokeWidth={1.700} /><circle cx="12" cy="16" r="2" fill="#1b1b1b" stroke="none" />
        </Svg>
        <Svg w={24} h={20} className="ml-3">
          <path d="M1 6.500h4l5-5v17l-5-5H1zM13 6.500q2 3.500 0 7M16 3.500q4 6.500 0 13M19.500 1q6 9 0 18" stroke="#1b1b1b" strokeWidth={1.500} />
        </Svg>
        <Svg w={24} h={16} className="ml-3"><rect x=".8" y="1" width="19.500" height="14" rx="3.500" stroke="#1b1b1b" /><rect x="3" y="3.300" width="12" height="9.400" rx="1.500" fill="#1b1b1b" stroke="none" /><path d="M22.500 5.500v5" stroke="#1b1b1b" strokeWidth={2.200} /></Svg>
        <div className="-mt-1 ml-[25px] flex w-[93px] shrink-0 flex-col items-end text-[18px] leading-6"><Fit w={44}>06.42</Fit><Fit w={93}>11/09/2023</Fit></div>
        <div className="ml-[11px] flex size-6 shrink-0 items-center justify-center rounded-full bg-[#0a78d4] text-[15px] leading-none text-white">3</div>
      </div>
    </div>
  );
}

export default function App() {
  return (
    <div className="flex h-[1080px] w-[1920px] flex-col overflow-hidden bg-[linear-gradient(100deg,#e2ebf2_0%,#e4ebf2_12%,#e3ebee_28%,#e5eaee_60%,#e4e9ed_100%)] font-['Open_Sans','Noto_Sans',sans-serif] text-[#2b2a29]">
      <TitleBar />
      <Tabs />
      <Ribbon />
      <HRuler />
      <Canvas />
      <StatusBar />
      <Taskbar />
    </div>
  );
}
